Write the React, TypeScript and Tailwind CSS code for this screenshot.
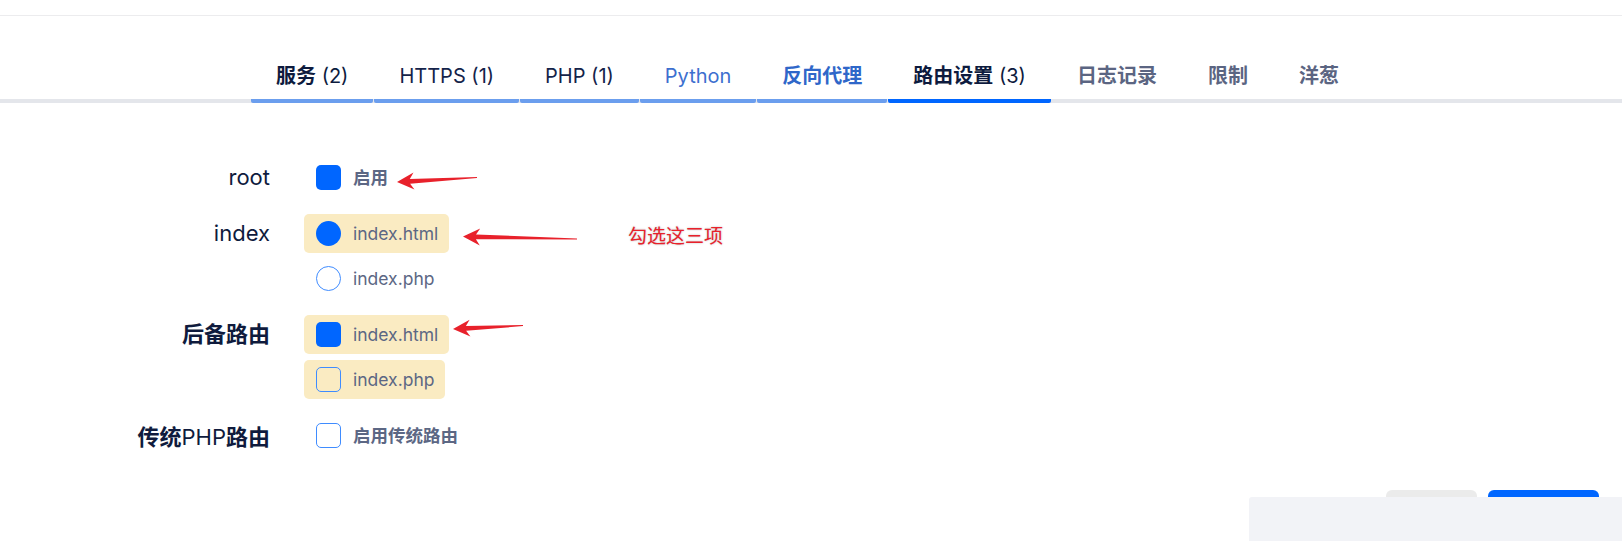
import React from "react";

const FONT = { fontFamily: 'Inter, "Noto Sans CJK SC", sans-serif' };

type Tab = {
  cjk?: string;
  latin?: string;
  text: string;
  bar: string;
};

const tabs: Tab[] = [
  { cjk: "服务", latin: " (2)", text: "text-[#0d1b3e]", bar: "border-[#6b9eee]" },
  { latin: "HTTPS (1)", text: "text-[#14234a]", bar: "border-[#6b9eee]" },
  { latin: "PHP (1)", text: "text-[#14234a]", bar: "border-[#6b9eee]" },
  { latin: "Python", text: "text-[#3d6fcf]", bar: "border-[#6b9eee]" },
  { cjk: "反向代理", text: "text-[#2f67c9]", bar: "border-[#6b9eee]" },
  { cjk: "路由设置", latin: " (3)", text: "text-[#0d1b3e]", bar: "border-[#0066ff]" },
  { cjk: "日志记录", text: "text-[#5b6582]", bar: "border-transparent" },
  { cjk: "限制", text: "text-[#5b6582]", bar: "border-transparent" },
  { cjk: "洋葱", text: "text-[#5b6582]", bar: "border-transparent" },
];

function Mark({ kind, checked }: { kind: "box" | "radio"; checked: boolean }) {
  const shape = kind === "radio" ? "rounded-full" : "rounded-[5px]";
  const fill = checked ? "bg-[#0066ff]" : "border-[1.5px] border-[#3f8cff]";
  return <span className={`w-[25px] h-[25px] shrink-0 ${shape} ${fill}`} />;
}

interface OptionProps {
  kind: "box" | "radio";
  checked?: boolean;
  marked?: boolean;
  children: React.ReactNode;
}

function Option({ kind, checked = false, marked = false, children }: OptionProps) {
  return (
    <div
      className={`self-start flex items-center gap-3 h-[39px] pl-3 pr-[11px] rounded-[5px] ${
        marked ? "bg-[#faebc2]" : ""
      }`}
    >
      <Mark kind={kind} checked={checked} />
      <span className="text-[17.5px] leading-6 text-[#5c6784]">{children}</span>
    </div>
  );
}

function Field({ label, children }: { label: React.ReactNode; children: React.ReactNode }) {
  return (
    <div className="flex gap-[34px]">
      <div className="w-[270px] h-[39px] flex items-center justify-end text-[22px] text-[#0f1b3d]">
        {label}
      </div>
      <div className="flex flex-col gap-[6px]">{children}</div>
    </div>
  );
}

// arrow polygon from tip to tail, head barbs swept back
function arrowPoints(tx: number, ty: number, lx: number, ly: number) {
  const len = Math.hypot(lx - tx, ly - ty);
  const ux = (lx - tx) / len;
  const uy = (ly - ty) / len;
  const nx = -uy;
  const ny = ux;
  const h = 17;
  const w = 8.5;
  const s = 2.4;
  const p = (a: number, b: number) =>
    `${(tx + ux * a + nx * b).toFixed(1)},${(ty + uy * a + ny * b).toFixed(1)}`;
  return [
    p(0, 0),
    p(h, w),
    p(h - 4, s),
    `${(lx + nx * 0.6).toFixed(1)},${(ly + ny * 0.6).toFixed(1)}`,
    `${(lx - nx * 0.6).toFixed(1)},${(ly - ny * 0.6).toFixed(1)}`,
    p(h - 4, -s),
    p(h, -w),
  ].join(" ");
}

const arrows = [
  [397, 182, 477, 177.5],
  [463, 236.5, 577, 239],
  [453, 329, 523, 325.5],
];

export default function App() {
  return (
    <div className="relative w-[1622px] h-[541px] overflow-hidden bg-white" style={FONT}>
      <div className="h-[16px] border-b border-[#ececee]" />

      {/* ─── Tabs ─── */}
      <div className="flex gap-px pl-[251px] pt-[46px] border-b-4 border-[#e4e6eb]">
        {tabs.map((t, i) => (
          <div
            key={i}
            className={`-mb-1 px-[25px] pb-[9px] border-b-4 rounded-b-[2px] text-[20px] leading-7 whitespace-pre ${t.text} ${t.bar}`}
          >
            {t.cjk && <span className="font-bold">{t.cjk}</span>}
            {t.latin && <span>{t.latin}</span>}
          </div>
        ))}
      </div>

      {/* ─── Form ─── */}
      <div className="flex flex-col gap-[17px] pt-[55px]">
        <Field label="root">
          <Option kind="box" checked>
            <span className="font-bold">启用</span>
          </Option>
        </Field>
        <Field label="index">
          <Option kind="radio" checked marked>
            index.html
          </Option>
          <Option kind="radio">index.php</Option>
        </Field>
        <Field label={<span className="font-bold">后备路由</span>}>
          <Option kind="box" checked marked>
            index.html
          </Option>
          <Option kind="box" marked>
            index.php
          </Option>
        </Field>
        <Field
          label={
            <span className="pt-1">
              <span className="font-bold">传统</span>PHP<span className="font-bold">路由</span>
            </span>
          }
        >
          <Option kind="box">
            <span className="font-bold">启用传统路由</span>
          </Option>
        </Field>
      </div>

      {/* ─── Footer buttons ─── */}
      <div className="flex justify-end gap-[11px] pt-[35px] pr-[23px]">
        <button className="w-[91px] h-[40px] rounded-md bg-[#ebebeb]" />
        <button className="w-[111px] h-[40px] rounded-md bg-[#0066ff]" />
      </div>

      {/* ─── Panel over the buttons ─── */}
      <div className="absolute left-[1249px] top-[497px] right-0 bottom-0 rounded-tl-[3px] bg-[#f2f3f7]" />

      {/* ─── Annotations ─── */}
      <svg className="absolute inset-0 pointer-events-none" width={1622} height={541}>
        {arrows.map(([tx, ty, lx, ly], i) => (
          <polygon key={i} points={arrowPoints(tx, ty, lx, ly)} fill="#e8212b" />
        ))}
      </svg>
      <div className="absolute left-[628px] top-[227px] text-[19px] leading-none text-[#e8212b] [text-shadow:0_0_2px_rgba(0,0,0,0.3)]">
        勾选这三项
      </div>
    </div>
  );
}
